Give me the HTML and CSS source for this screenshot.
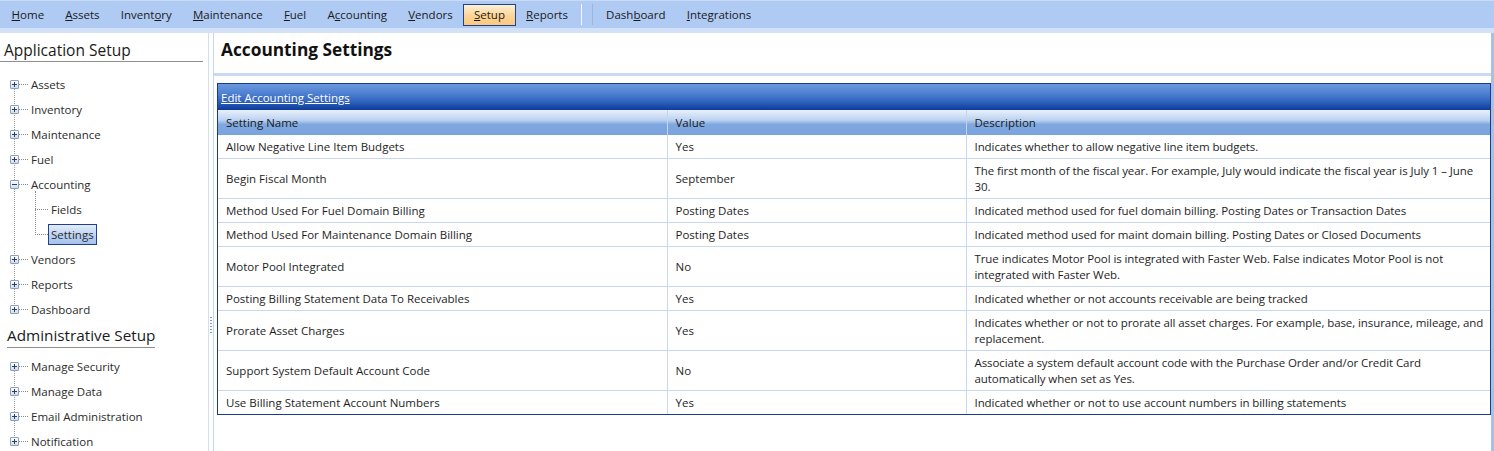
FILE: index.html
```html
<!doctype html>
<html lang="en">
  <head>
    <meta charset="UTF-8" />
    <meta name="viewport" content="width=device-width, initial-scale=1.0" />
    <title>Accounting Settings</title>
    <link rel="stylesheet" href="styles.css">
  </head>
  <body>
    <nav class="menubar">
      <a class="menu-item"><u>H</u>ome</a>
      <a class="menu-item"><u>A</u>ssets</a>
      <a class="menu-item">Invent<u>o</u>ry</a>
      <a class="menu-item"><u>M</u>aintenance</a>
      <a class="menu-item"><u>F</u>uel</a>
      <a class="menu-item">A<u>c</u>counting</a>
      <a class="menu-item"><u>V</u>endors</a>
      <a class="menu-item active"><u>S</u>etup</a>
      <a class="menu-item"><u>R</u>eports</a>
      <span class="menu-sep"></span>
      <a class="menu-item">Dash<u>b</u>oard</a>
      <a class="menu-item"><u>I</u>ntegrations</a>
    </nav>
    <div class="menubar-under"></div>

    <div class="main">
      <aside class="sidebar">
        <h2 class="side-title first">Application Setup</h2>
        <ul class="tree">
          <li><div class="node"><span class="exp plus"></span><span class="hline"></span><span class="label">Assets</span></div></li>
          <li><div class="node"><span class="exp plus"></span><span class="hline"></span><span class="label">Inventory</span></div></li>
          <li><div class="node"><span class="exp plus"></span><span class="hline"></span><span class="label">Maintenance</span></div></li>
          <li><div class="node"><span class="exp plus"></span><span class="hline"></span><span class="label">Fuel</span></div></li>
          <li>
            <div class="node"><span class="exp minus"></span><span class="hline"></span><span class="label">Accounting</span></div>
            <ul class="subtree">
              <li><div class="node"><span class="hline long"></span><span class="label">Fields</span></div></li>
              <li><div class="node"><span class="hline long"></span><span class="label selected">Settings</span></div></li>
            </ul>
          </li>
          <li><div class="node"><span class="exp plus"></span><span class="hline"></span><span class="label">Vendors</span></div></li>
          <li><div class="node"><span class="exp plus"></span><span class="hline"></span><span class="label">Reports</span></div></li>
          <li><div class="node"><span class="exp plus"></span><span class="hline"></span><span class="label">Dashboard</span></div></li>
        </ul>
        <h2 class="side-title second"><span>Administrative Setup</span></h2>
        <ul class="tree">
          <li><div class="node"><span class="exp plus"></span><span class="hline"></span><span class="label">Manage Security</span></div></li>
          <li><div class="node"><span class="exp plus"></span><span class="hline"></span><span class="label">Manage Data</span></div></li>
          <li><div class="node"><span class="exp plus"></span><span class="hline"></span><span class="label">Email Administration</span></div></li>
          <li><div class="node"><span class="exp plus"></span><span class="hline"></span><span class="label">Notification</span></div></li>
        </ul>
      </aside>

      <div class="splitter"><span class="grip"></span></div>

      <section class="content">
        <h1 class="page-title">Accounting Settings</h1>
        <div class="grid">
          <div class="grid-caption"><a href="#">Edit Accounting Settings</a></div>
          <table>
            <colgroup>
              <col class="c-name">
              <col class="c-value">
              <col class="c-desc">
            </colgroup>
            <thead>
              <tr><th>Setting Name</th><th>Value</th><th>Description</th></tr>
            </thead>
            <tbody>
              <tr><td>Allow Negative Line Item Budgets</td><td>Yes</td><td>Indicates whether to allow negative line item budgets.</td></tr>
              <tr><td>Begin Fiscal Month</td><td>September</td><td>The first month of the fiscal year. For example, July would indicate the fiscal year is July 1 – June<br>30.</td></tr>
              <tr><td>Method Used For Fuel Domain Billing</td><td>Posting Dates</td><td>Indicated method used for fuel domain billing. Posting Dates or Transaction Dates</td></tr>
              <tr><td>Method Used For Maintenance Domain Billing</td><td>Posting Dates</td><td>Indicated method used for maint domain billing. Posting Dates or Closed Documents</td></tr>
              <tr><td>Motor Pool Integrated</td><td>No</td><td>True indicates Motor Pool is integrated with Faster Web. False indicates Motor Pool is not<br>integrated with Faster Web.</td></tr>
              <tr><td>Posting Billing Statement Data To Receivables</td><td>Yes</td><td>Indicated whether or not accounts receivable are being tracked</td></tr>
              <tr><td>Prorate Asset Charges</td><td>Yes</td><td>Indicates whether or not to prorate all asset charges. For example, base, insurance, mileage, and<br>replacement.</td></tr>
              <tr><td>Support System Default Account Code</td><td>No</td><td>Associate a system default account code with the Purchase Order and/or Credit Card<br>automatically when set as Yes.</td></tr>
              <tr><td>Use Billing Statement Account Numbers</td><td>Yes</td><td>Indicated whether or not to use account numbers in billing statements</td></tr>
            </tbody>
          </table>
        </div>
      </section>
    </div>
  </body>
</html>
```

FILE: styles.css
```css
* {
  box-sizing: border-box;
  margin: 0;
  padding: 0;
}
body {
  font-family: 'Open Sans', 'Noto Sans', sans-serif;
  font-size: 11.5px;
  color: #1e1e1e;
  background: #ffffff;
  height: 451px;
  overflow: hidden;
}

/* top menu */
.menubar {
  display: flex;
  align-items: center;
  height: 28px;
  padding-left: 1px;
  background: #afcaf3;
  border-top: 1px solid #c9dbf7;
}
.menu-item {
  display: flex;
  align-items: center;
  height: 22px;
  padding: 0 9.6px;
  color: #1a1a1a;
  border: 1px solid transparent;
  cursor: default;
}
.menu-item.active {
  border-color: #1f3f94;
  background: linear-gradient(#fff0d4, #fdd495 55%, #fbc97c);
}
.menu-sep {
  width: 12px;
  height: 21px;
  margin: 0 3px 0 2px;
  border-left: 1px solid #f4f8ff;
  border-right: 1px solid #98b5e4;
}
.menubar-under {
  height: 5px;
  background: #d2e1f7;
}

.main {
  display: flex;
  height: 418px;
}

/* left panel */
.sidebar {
  width: 208px;
  flex-shrink: 0;
  padding-right: 5px;
}
.side-title {
  font-weight: normal;
  color: #1a1a1a;
}
.side-title.first {
  padding: 6px 0 0 4px;
  height: 29px;
  font-size: 15.5px;
  line-height: 22px;
  border-bottom: 1px solid #8f8f8f;
}
.side-title.second {
  padding-left: 7px;
  height: 27px;
  font-size: 15.3px;
  line-height: 26px;
}
.side-title.second span {
  display: inline-block;
  border-bottom: 1px solid #8f8f8f;
  line-height: 24px;
}
.tree {
  list-style: none;
  position: relative;
  margin-top: 10px;
}
.side-title.second + .tree {
  margin-top: 5px;
}
.tree::before {
  content: '';
  position: absolute;
  left: 14px;
  top: 12px;
  bottom: 12px;
  border-left: 1px dotted #9a9a9a;
}
.node {
  display: flex;
  align-items: center;
  height: 25px;
}
.exp {
  position: relative;
  width: 9px;
  height: 9px;
  margin-left: 10px;
  border: 1px solid #8aa0bd;
  border-radius: 1px;
  background: linear-gradient(#ffffff, #cfdcee);
}
.exp::before,
.plus::after {
  content: '';
  position: absolute;
  background: #2f3f5a;
}
.exp::before {
  left: 1px;
  top: 3px;
  width: 5px;
  height: 1px;
}
.plus::after {
  left: 3px;
  top: 1px;
  width: 1px;
  height: 5px;
}
.hline {
  width: 9px;
  border-top: 1px dotted #8a8a8a;
}
.label {
  padding: 2px 3px;
  color: #2b2b2b;
  white-space: nowrap;
}
.subtree {
  list-style: none;
  position: relative;
  padding-left: 35px;
}
.subtree::before {
  content: '';
  position: absolute;
  left: 35px;
  top: -6px;
  bottom: 12px;
  border-left: 1px dotted #8a8a8a;
}
.hline.long {
  width: 13px;
}
.label.selected {
  border: 1px solid #1f3f94;
  padding: 2px 2px;
  background: linear-gradient(#e4edfa, #b8cff1 60%, #a6c2ec);
}

/* splitter */
.splitter {
  position: relative;
  width: 6px;
  flex-shrink: 0;
  border-left: 1px solid #d3deee;
  border-right: 1px solid #c5d7f0;
}
.grip {
  position: absolute;
  left: 1px;
  top: 284px;
  width: 2px;
  height: 18px;
  background: repeating-linear-gradient(#7a9bd0 0 1px, transparent 1px 3px);
}

/* right content */
.content {
  flex: 1;
  padding: 0 0 0 3px;
  border-right: 3px solid #a8c0e2;
}
.page-title {
  height: 43px;
  padding: 6px 0 0 7px;
  margin-left: -3px;
  font-size: 17.3px;
  line-height: 22px;
  color: #111;
  border-bottom: 3px solid #c8daf2;
}
.grid {
  margin-top: 7px;
  border: 1px solid #163c8c;
}
.grid-caption {
  height: 26px;
  padding-left: 3px;
  display: flex;
  align-items: center;
  background: linear-gradient(#6c98dd, #4f81d3 35%, #3366bf 65%, #0d3b9c);
}
.grid-caption a {
  color: #ffffff;
}
table {
  width: 100%;
  border-collapse: collapse;
  table-layout: fixed;
}
.c-name {
  width: 449px;
}
.c-value {
  width: 299px;
}
th {
  height: 25px;
  padding: 0 8px;
  text-align: left;
  font-weight: normal;
  color: #1a1a1a;
  background: linear-gradient(#e9f0fb, #bcd2f1 40%, #80a7df 58%, #7aa3de);
  border-left: 1px solid #c2d4ee;
}
th:first-child,
td:first-child {
  border-left: none;
}
td {
  padding: 4px 2px 3px 8px;
  line-height: 16px;
  vertical-align: middle;
  border-top: 1px solid #c9d7ef;
  border-left: 1px solid #c9d7ef;
  color: #1e1e1e;
}
td:last-child {
  white-space: nowrap;
  overflow: hidden;
  padding-right: 0;
  letter-spacing: -0.08px;
}
tbody tr:first-child td {
  border-top: none;
}
tbody tr td {
  height: 23px;
}
```
